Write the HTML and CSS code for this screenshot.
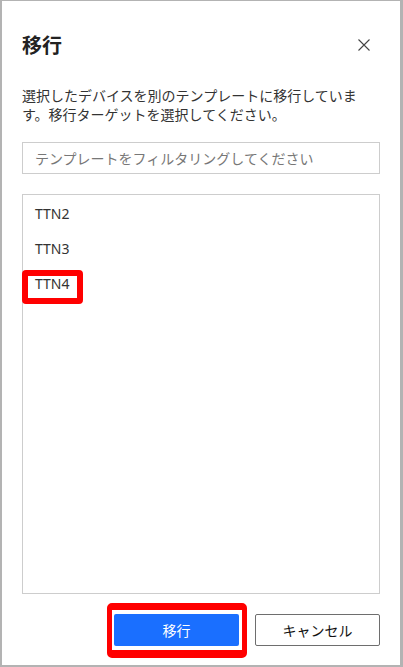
FILE: index.html
```html
<!DOCTYPE html>
<html lang="ja">
<head>
<meta charset="utf-8">
<title>移行</title>
<link rel="stylesheet" href="styles.css">
</head>
<body>
<div class="dialog">
  <div class="header">
    <h1 class="title">移行</h1>
    <button class="close" aria-label="閉じる">
      <svg width="12" height="12" viewBox="0 0 12 12"><path d="M0.5 0.5L11.5 11.5M11.5 0.5L0.5 11.5" stroke="#444" stroke-width="1.1" fill="none"/></svg>
    </button>
  </div>
  <p class="desc">選択したデバイスを別のテンプレートに移行しています。移行ターゲットを選択してください。</p>
  <div class="filter">テンプレートをフィルタリングしてください</div>
  <ul class="list">
    <li class="item">TTN2</li>
    <li class="item">TTN3</li>
    <li class="item marked">TTN4</li>
  </ul>
  <div class="footer">
    <button class="btn primary">移行</button>
    <button class="btn secondary">キャンセル</button>
  </div>
</div>
</body>
</html>
```
FILE: styles.css
```css
html, body {
  margin: 0;
  padding: 0;
}
body {
  background: #b3b3b3;
  font-family: "Noto Sans", "Noto Sans CJK JP", sans-serif;
  color: #333;
  width: 403px;
  height: 667px;
  overflow: hidden;
}
.dialog {
  box-sizing: border-box;
  margin: 1px 3px 0 2px;
  width: 398px;
  height: 664px;
  background: #fff;
  padding: 0 20px;
  display: flex;
  flex-direction: column;
}
.header {
  display: flex;
  align-items: center;
  justify-content: space-between;
  padding-top: 30px;
}
.title {
  margin: 0;
  font-size: 20px;
  font-weight: 700;
  line-height: 28px;
  color: #222;
  font-family: "Noto Sans CJK JP", sans-serif;
}
.close {
  border: 0;
  background: none;
  padding: 0;
  width: 12px;
  height: 12px;
  margin-right: 10px;
  display: flex;
}
.desc {
  margin: 27px 0 0;
  font-size: 14px;
  line-height: 19px;
  color: #333;
  font-family: "Noto Sans CJK JP", sans-serif;
}
.filter {
  box-sizing: border-box;
  margin-top: 18px;
  height: 32px;
  border: 1px solid #cdcdcd;
  padding-left: 12px;
  font-size: 14px;
  line-height: 30px;
  color: #777;
  font-family: "Noto Sans CJK JP", sans-serif;
}
.list {
  box-sizing: border-box;
  list-style: none;
  margin: 20px 0 0;
  padding: 1px 0 0;
  height: 400px;
  border: 1px solid #cdcdcd;
}
.item {
  position: relative;
  padding-left: 12px;
  height: 35px;
  line-height: 35px;
  font-size: 14px;
  color: #333;
}
.marked::after {
  content: "";
  position: absolute;
  left: -1px;
  top: 4px;
  width: 61px;
  height: 34px;
  box-sizing: border-box;
  border: 6px solid #ff0000;
  border-radius: 4px;
}
.footer {
  display: flex;
  justify-content: flex-end;
  gap: 16px;
  margin-top: 20px;
}
.btn {
  box-sizing: border-box;
  width: 125px;
  height: 32px;
  font-size: 14px;
  font-family: "Noto Sans CJK JP", sans-serif;
  border-radius: 2px;
  cursor: pointer;
}
.primary {
  position: relative;
  background: #1a6fff;
  border: 0;
  color: #fff;
}
.primary::after {
  content: "";
  position: absolute;
  left: -7px;
  right: -8px;
  top: -11px;
  bottom: -12px;
  border-style: solid;
  border-color: #ff0000;
  border-width: 7px 5px 8px 5px;
  border-radius: 5px;
}
.secondary {
  background: #fff;
  border: 1px solid #6e6e6e;
  color: #111;
}
```
